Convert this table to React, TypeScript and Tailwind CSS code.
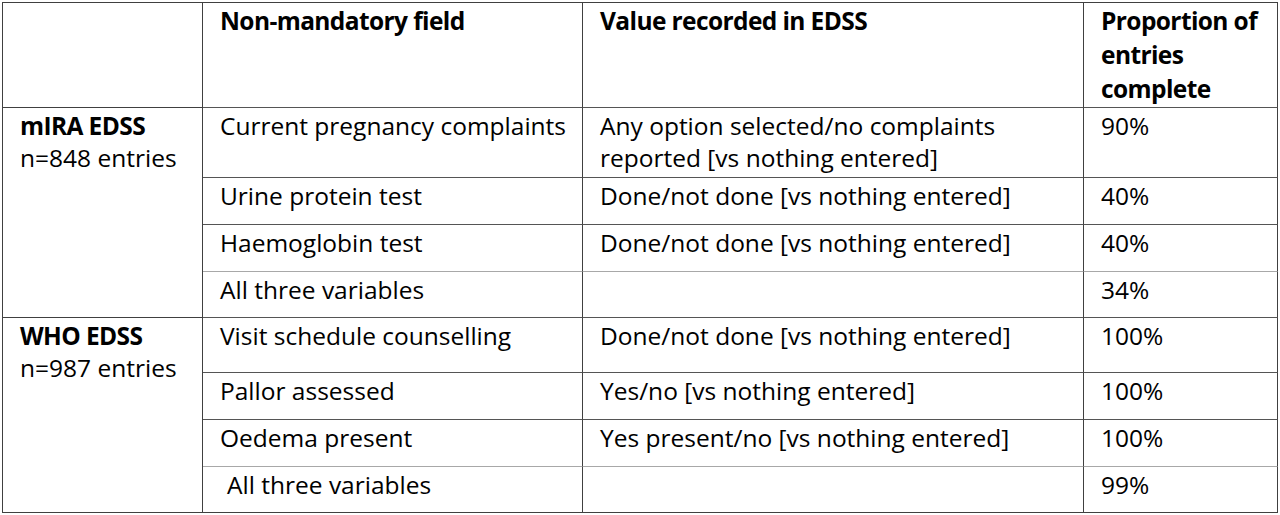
import React from "react";

type Row = { field: string; value: React.ReactNode; pct: string; indent?: boolean; light?: boolean };

const mira: Row[] = [
  { field: "Current pregnancy complaints", value: <>Any option selected/no complaints<br />reported [vs nothing entered]</>, pct: "90%" },
  { field: "Urine protein test", value: "Done/not done [vs nothing entered]", pct: "40%" },
  { field: "Haemoglobin test", value: "Done/not done [vs nothing entered]", pct: "40%" },
  { field: "All three variables", value: "", pct: "34%", light: true },
];

const who: Row[] = [
  { field: "Visit schedule counselling", value: "Done/not done [vs nothing entered]", pct: "100%" },
  { field: "Pallor assessed", value: "Yes/no [vs nothing entered]", pct: "100%" },
  { field: "Oedema present", value: "Yes present/no [vs nothing entered]", pct: "100%" },
  { field: "All three variables", value: "", pct: "99%", indent: true, light: true },
];

function Cells({ r }: { r: Row }) {
  const top = r.light ? "border-t-[#a8a8a8]" : "border-t-[#555555]";
  const base = `border-r border-r-[#404040] border-t ${top} px-[17px] pt-[2px] leading-[32px] whitespace-nowrap`;
  return (
    <>
      <div className={base}>
        <span className={r.indent ? "pl-[7px]" : ""}>{r.field}</span>
      </div>
      <div className={base}>{r.value}</div>
      <div className={base}>{r.pct}</div>
    </>
  );
}

export default function App() {
  return (
    <div className="w-[1280px] h-[515px] bg-white text-black" style={{ fontFamily: '"Open Sans", "Noto Sans", sans-serif' }}>
      <div className="ml-[2px] mt-[2px] w-[1276px] border-l border-t border-b border-[#404040] grid grid-cols-[200px_380px_501px_194px] grid-rows-[104px_70px_47px_47px_46px_55px_47px_47px_46px] text-[24.5px]">
        <div className="border-r border-r-[#404040]" />
        <div className="border-r border-r-[#404040] px-[17px] pt-[1px] leading-[34px] font-bold tracking-[-0.6px]">Non-mandatory field</div>
        <div className="border-r border-r-[#404040] px-[17px] pt-[1px] leading-[34px] font-bold tracking-[-0.6px]">Value recorded in EDSS</div>
        <div className="border-r border-r-[#404040] px-[17px] pt-[1px] leading-[34px] font-bold tracking-[-0.6px] whitespace-nowrap">
          Proportion of<br />entries<br />complete
        </div>

        <div className="row-span-4 border-r border-r-[#404040] border-t border-t-[#404040] px-[17px] pt-[2px] leading-[32px] whitespace-nowrap">
          <div className="font-bold tracking-[-0.6px]">mIRA EDSS</div>
          <div>n=848 entries</div>
        </div>
        {mira.map((r, i) => (
          <Cells key={"m" + i} r={r} />
        ))}

        <div className="row-span-4 border-r border-r-[#404040] border-t border-t-[#404040] px-[17px] pt-[2px] leading-[32px] whitespace-nowrap">
          <div className="font-bold tracking-[-0.6px]">WHO EDSS</div>
          <div>n=987 entries</div>
        </div>
        {who.map((r, i) => (
          <Cells key={"w" + i} r={r} />
        ))}
      </div>
    </div>
  );
}
